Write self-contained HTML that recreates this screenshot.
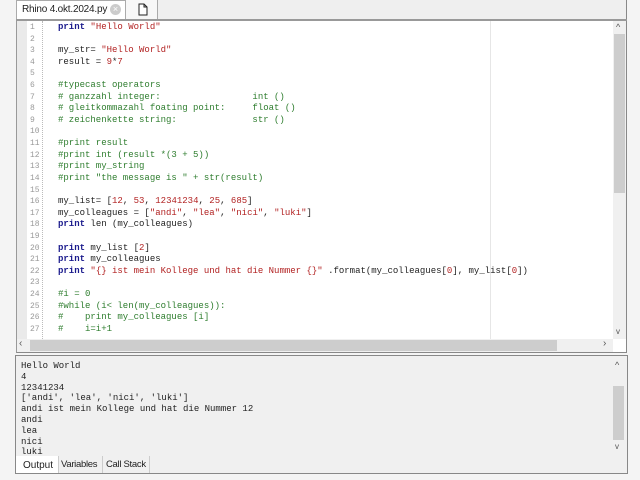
<!DOCTYPE html>
<html><head><meta charset="utf-8"><style>
*{margin:0;padding:0;box-sizing:border-box}
body{width:640px;height:480px;background:#f4f4f4;position:relative;overflow:hidden;font-family:"Liberation Sans",sans-serif}
.abs{position:absolute}
.mono{font-family:"Liberation Mono",monospace;font-size:9px;white-space:pre}
.k{color:#1a1a8c;font-weight:bold}
.s{color:#b22222}
.c{color:#2e7d2e}
.n{color:#b22222}
</style></head><body>
<!-- tab bar -->
<div class="abs" style="left:16px;top:0;width:611px;height:20px;background:#efefef;border-right:1px solid #888"></div>
<div class="abs" style="left:16px;top:0;width:110px;height:20px;background:#fff;border:1px solid #aaa;border-bottom:none"></div>
<div class="abs" style="left:22px;top:4px;font-size:10px;color:#222;letter-spacing:-0.2px">Rhino 4.okt.2024.py</div>
<div class="abs" style="left:110px;top:4px;width:11px;height:11px;border-radius:50%;background:#ccc;color:#fff;font-size:9px;line-height:11px;text-align:center">×</div>
<div class="abs" style="left:126px;top:0;width:32px;height:20px;border-right:1px solid #aaa;background:#f7f7f7"></div>
<svg class="abs" style="left:138px;top:3px" width="10" height="13"><path d="M1 1H6L9 4V12H1Z M6 1V4H9" fill="#fff" stroke="#222"/></svg>
<div class="abs" style="left:16px;top:19px;width:611px;height:2px;background:#999"></div>
<!-- editor -->
<div class="abs" style="left:16px;top:21px;width:611px;height:332px;background:#fff;border-left:1px solid #999;border-right:1px solid #888;border-bottom:1px solid #888"></div>
<div class="abs" style="left:17px;top:21px;width:10px;height:318px;background:#eaeaea"></div>
<div class="abs" style="left:42px;top:21px;width:1px;height:318px;border-left:1px dotted #bbb"></div>
<div class="abs" style="left:490px;top:21px;width:1px;height:318px;background:#e6e6e6"></div>
<div class="abs mono" style="left:30px;top:22px;line-height:11.615px;color:#999;font-size:8px">1
2
3
4
5
6
7
8
9
10
11
12
13
14
15
16
17
18
19
20
21
22
23
24
25
26
27</div>
<div class="abs mono" style="left:58px;top:22px;line-height:11.615px;color:#222"><span class="k">print</span> <span class="s">"Hello World"</span>

my_str= <span class="s">"Hello World"</span>
result = <span class="n">9</span>*<span class="n">7</span>

<span class="c">#typecast operators
# ganzzahl integer:                 int ()
# gleitkommazahl foating point:     float ()
# zeichenkette string:              str ()</span>

<span class="c">#print result
#print int (result *(3 + 5))
#print my_string
#print "the message is " + str(result)</span>

my_list= [<span class="n">12</span>, <span class="n">53</span>, <span class="n">12341234</span>, <span class="n">25</span>, <span class="n">685</span>]
my_colleagues = [<span class="s">"andi"</span>, <span class="s">"lea"</span>, <span class="s">"nici"</span>, <span class="s">"luki"</span>]
<span class="k">print</span> len (my_colleagues)

<span class="k">print</span> my_list [<span class="n">2</span>]
<span class="k">print</span> my_colleagues
<span class="k">print</span> <span class="s">"{} ist mein Kollege und hat die Nummer {}"</span> .format(my_colleagues[<span class="n">0</span>], my_list[<span class="n">0</span>])

<span class="c">#i = 0
#while (i&lt; len(my_colleagues)):
#    print my_colleagues [i]
#    i=i+1</span></div>
<!-- v scrollbar -->
<div class="abs" style="left:613px;top:21px;width:13px;height:318px;background:#f0f0f0"></div>
<div class="abs" style="left:614px;top:34px;width:11px;height:159px;background:#cdcdcd"></div>
<div class="abs" style="left:616px;top:22px;font-size:9px;color:#555">^</div>
<div class="abs" style="left:616px;top:327px;font-size:8px;color:#555">v</div>
<!-- h scrollbar -->
<div class="abs" style="left:17px;top:339px;width:596px;height:13px;background:#f0f0f0"></div>
<div class="abs" style="left:30px;top:340px;width:527px;height:11px;background:#cdcdcd"></div>
<div class="abs" style="left:19px;top:338px;font-size:10px;color:#555">‹</div>
<div class="abs" style="left:603px;top:338px;font-size:10px;color:#555">›</div>
<!-- output -->
<div class="abs" style="left:15px;top:355px;width:613px;height:119px;background:#f0f0f0;border:1px solid #888"></div>
<div class="abs mono" style="left:21px;top:361px;line-height:10.8px;color:#222">Hello World
4
12341234
['andi', 'lea', 'nici', 'luki']
andi ist mein Kollege und hat die Nummer 12
andi
lea
nici
luki</div>
<div class="abs" style="left:612px;top:357px;width:13px;height:99px;background:#f0f0f0"></div>
<div class="abs" style="left:613px;top:386px;width:11px;height:54px;background:#cdcdcd"></div>
<div class="abs" style="left:615px;top:360px;font-size:9px;color:#555">^</div>
<div class="abs" style="left:615px;top:442px;font-size:8px;color:#555">v</div>
<div class="abs" style="left:16px;top:456px;width:611px;height:17px;background:#f0f0f0"></div>
<div class="abs" style="left:16px;top:456px;width:42px;height:17px;background:#fff"></div>
<div class="abs" style="left:23px;top:460px;font-size:10px;color:#222">Output</div>
<div class="abs" style="left:58px;top:456px;width:1px;height:17px;background:#ccc"></div>
<div class="abs" style="left:61px;top:459px;font-size:9.5px;color:#222;letter-spacing:-0.3px">Variables</div>
<div class="abs" style="left:102px;top:456px;width:1px;height:17px;background:#ccc"></div>
<div class="abs" style="left:106px;top:459px;font-size:9.5px;color:#222;letter-spacing:-0.3px">Call Stack</div>
<div class="abs" style="left:149px;top:456px;width:1px;height:17px;background:#ccc"></div>
</body></html>
